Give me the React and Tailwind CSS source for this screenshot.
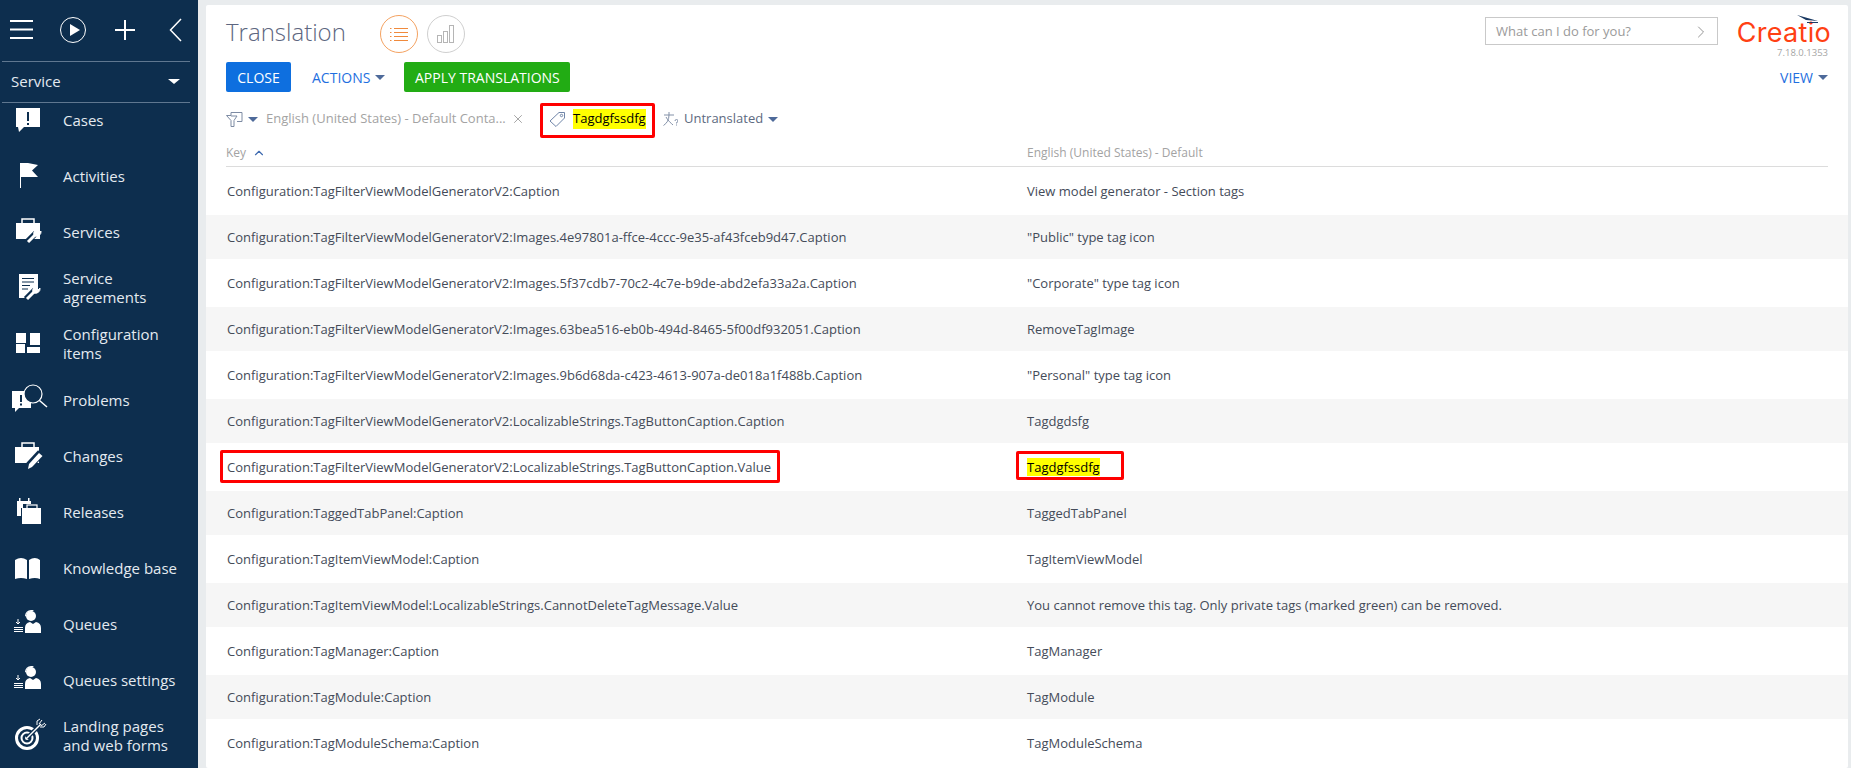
import { ChevronRight, ChevronUp, X } from 'lucide-react';

const NAV = [
  { label: ['Cases'], icon: 'cases' },
  { label: ['Activities'], icon: 'activities' },
  { label: ['Services'], icon: 'services' },
  { label: ['Service', 'agreements'], icon: 'agreements' },
  { label: ['Configuration', 'items'], icon: 'config' },
  { label: ['Problems'], icon: 'problems' },
  { label: ['Changes'], icon: 'changes' },
  { label: ['Releases'], icon: 'releases' },
  { label: ['Knowledge base'], icon: 'book' },
  { label: ['Queues'], icon: 'queues' },
  { label: ['Queues settings'], icon: 'queues' },
  { label: ['Landing pages', 'and web forms'], icon: 'target' },
];

const ROWS = [
  ['Configuration:TagFilterViewModelGeneratorV2:Caption', 'View model generator - Section tags'],
  ['Configuration:TagFilterViewModelGeneratorV2:Images.4e97801a-ffce-4ccc-9e35-af43fceb9d47.Caption', '"Public" type tag icon'],
  ['Configuration:TagFilterViewModelGeneratorV2:Images.5f37cdb7-70c2-4c7e-b9de-abd2efa33a2a.Caption', '"Corporate" type tag icon'],
  ['Configuration:TagFilterViewModelGeneratorV2:Images.63bea516-eb0b-494d-8465-5f00df932051.Caption', 'RemoveTagImage'],
  ['Configuration:TagFilterViewModelGeneratorV2:Images.9b6d68da-c423-4613-907a-de018a1f488b.Caption', '"Personal" type tag icon'],
  ['Configuration:TagFilterViewModelGeneratorV2:LocalizableStrings.TagButtonCaption.Caption', 'Tagdgdsfg'],
  ['Configuration:TagFilterViewModelGeneratorV2:LocalizableStrings.TagButtonCaption.Value', 'Tagdgfssdfg', true],
  ['Configuration:TaggedTabPanel:Caption', 'TaggedTabPanel'],
  ['Configuration:TagItemViewModel:Caption', 'TagItemViewModel'],
  ['Configuration:TagItemViewModel:LocalizableStrings.CannotDeleteTagMessage.Value', 'You cannot remove this tag. Only private tags (marked green) can be removed.'],
  ['Configuration:TagManager:Caption', 'TagManager'],
  ['Configuration:TagModule:Caption', 'TagModule'],
  ['Configuration:TagModuleSchema:Caption', 'TagModuleSchema'],
];

const NAVY = '#0d2e4e';

function Wrench({ x = 0, y = 0 }) {
  return (
    <g transform={`translate(${x} ${y})`}>
      <path d="M1 15 L10 6" stroke={NAVY} strokeWidth="6" fill="none" />
      <path d="M2 15 L10 7" stroke="white" strokeWidth="3" fill="none" />
      <path d="M8 8 a4.5 4.5 0 0 1 5-6 l-2.500 2.500 2 2 2.500-2.500 a4.500 4.500 0 0 1-6 5z" fill="white" stroke="white" strokeWidth="1" />
    </g>
  );
}

function Agent() {
  return (
    <>
      <circle cx="23" cy="12" r="5" fill="white" />
      <path d="M17 12 a6 6 0 0 1 6 -6 h3 l-2 1.500 a5 5 0 0 0 -6 5z" fill="white" />
      <path d="M17 29 v-5 q0 -5 5 -6 l3 2 l3 -2 q5 1 5 6 v5z" fill="white" />
      <path d="M10 15 v5 M8 18 l2 2 2-2" stroke="white" strokeWidth="1" fill="none" />
      <path d="M6 23.500 h9 M6 25.500 h9 M6 27.500 h9" stroke="white" strokeWidth="1" />
    </>
  );
}

function NavIcon({ name }) {
  return (
    <svg width="40" height="40" viewBox="0 0 40 40" className="shrink-0">
      {name === 'cases' && (
        <>
          <path d="M8 8 H32 V27 H16 L11 32 L10 27 H8 Z" fill="white" />
          <rect x="19" y="12" width="2" height="9" fill={NAVY} />
          <rect x="19" y="23" width="2" height="2" fill={NAVY} />
        </>
      )}
      {name === 'activities' && (
        <>
          <rect x="12" y="7" width="1" height="25" fill="white" />
          <path d="M13 7 H20 L30 9 L24 14.500 L30 21 H13 Z" fill="white" />
        </>
      )}
      {name === 'services' && (
        <>
          <rect x="14" y="7" width="12" height="5" fill="none" stroke="white" strokeWidth="1.500" />
          <rect x="8" y="11" width="24" height="16" fill="white" />
          <Wrench x={18} y={15} />
        </>
      )}
      {name === 'agreements' && (
        <>
          <path d="M11 6 H30 V22 L18 30 H11 Z" fill="white" />
          <path d="M14 10.500 H26 M14 14 H26 M14 17.500 H22 M14 21 H20" stroke={NAVY} strokeWidth="1.200" />
          <Wrench x={17} y={16} />
        </>
      )}
      {name === 'config' && (
        <>
          <rect x="8" y="9" width="10" height="10" fill="white" />
          <rect x="22" y="9" width="10" height="12" fill="white" />
          <rect x="8" y="20" width="9" height="9" fill="white" />
          <rect x="19" y="23" width="13" height="6" fill="white" />
        </>
      )}
      {name === 'problems' && (
        <>
          <path d="M4 11 H23 V28 H11 L7 32 V28 H4 Z" fill="white" />
          <rect x="12" y="15" width="2" height="7" fill={NAVY} />
          <rect x="12" y="23.500" width="2" height="2" fill={NAVY} />
          <circle cx="25" cy="14" r="9" fill={NAVY} stroke="white" strokeWidth="1.200" />
          <path d="M31.500 20.500 L39 27" stroke="white" strokeWidth="1.500" />
        </>
      )}
      {name === 'changes' && (
        <>
          <rect x="14" y="7" width="12" height="5" fill="none" stroke="white" strokeWidth="1.500" />
          <rect x="7" y="11" width="24" height="16" fill="white" />
          <path d="M20 31 L33 17" stroke={NAVY} strokeWidth="8" />
          <path d="M20 33 L21 28 L31 17 L34.500 20 L24 31 Z" fill="white" />
        </>
      )}
      {name === 'releases' && (
        <>
          <path d="M9 9 H23 V12 H15 V16 H13 V24 H9 Z" fill="white" />
          <rect x="11" y="6" width="1.500" height="3" fill="white" />
          <rect x="20" y="6" width="1.500" height="3" fill="white" />
          <rect x="19" y="13" width="10" height="4" fill="none" stroke="white" strokeWidth="1.200" />
          <rect x="14" y="16" width="19" height="16" fill="white" />
        </>
      )}
      {name === 'book' && (
        <path d="M7 12 Q13 8 19 12 V31 Q13 29 7 31 Z M21 12 Q27 8 32 12 V31 Q27 29 21 31 Z" fill="white" />
      )}
      {name === 'queues' && <Agent />}
      {name === 'target' && (
        <>
          <circle cx="19" cy="22" r="10.500" fill="none" stroke="white" strokeWidth="3" />
          <circle cx="19" cy="22" r="5.500" fill="none" stroke="white" strokeWidth="2" />
          <circle cx="19" cy="22" r="2" fill="white" />
          <path d="M19 22 L33 8" stroke={NAVY} strokeWidth="4" />
          <path d="M19 22 L33 8" stroke="white" strokeWidth="1.500" />
          <path d="M29 9 V5 L32 3 M32 11 H36 L38 8 M31 8 L34 4 M33 10 L37 7" stroke="white" strokeWidth="1" fill="none" />
        </>
      )}
    </svg>
  );
}

function Sidebar() {
  return (
    <aside className="w-[198px] shrink-0 h-full bg-[#0d2e4e] text-[#e4eaf0] overflow-hidden">
      <div className="h-[61px] flex items-center relative">
        <svg width="198" height="61" viewBox="0 0 198 61">
          <path d="M10 21 H33 M10 29.500 H33 M10 38 H33" stroke="white" strokeWidth="2" />
          <circle cx="73" cy="30" r="12.500" fill="none" stroke="white" strokeWidth="1" />
          <path d="M70 24 L80 30 L70 36 Z" fill="white" />
          <path d="M115 30 H135 M125 20 V40" stroke="white" strokeWidth="2" />
          <path d="M181 19 L170.500 30 L181 41" stroke="white" strokeWidth="1.500" fill="none" />
        </svg>
      </div>
      <div className="mx-[2px] w-[188px] h-[42px] pb-[2px] border-y border-[#5f7790] flex items-center justify-between pl-[9px] pr-[10px] text-[15px]">
        <span>Service</span>
        <span className="w-0 h-0 border-x-[6px] border-x-transparent border-t-[5px] border-t-white" />
      </div>
      <nav className="-mt-[11px] text-[15px] leading-[19px]">
        {NAV.map((item, i) => (
          <div key={i} className="h-[56px] flex items-center pl-2">
            <NavIcon name={item.icon} />
            <div className="ml-[15px]">
              {item.label.map((line) => (
                <div key={line}>{line}</div>
              ))}
            </div>
          </div>
        ))}
      </nav>
    </aside>
  );
}

function Caret({ className = 'border-t-[#4e6a9a]' }) {
  return <span className={`inline-block w-0 h-0 border-x-[5px] border-x-transparent border-t-[5px] ${className}`} />;
}

function Header() {
  return (
    <div className="pl-5 pr-[20px]">
      <div className="h-[57px] flex items-start">
        <h1 className="mt-[8px] text-[24px] leading-[38px] font-light text-[#5d6680]">Translation</h1>
        <div className="mt-[10px] ml-[34px] w-[38px] h-[38px] rounded-full border border-[#f4a261] flex items-center justify-center">
          <svg width="18" height="14" viewBox="0 0 18 14" stroke="#f08a3c" strokeWidth="1">
            <path d="M0 1.500 H1.500 M4 1.500 H18 M0 5.500 H1.500 M4 5.500 H18 M0 9.500 H1.500 M4 9.500 H18 M0 13.500 H1.500 M4 13.500 H18" />
          </svg>
        </div>
        <div className="mt-[10px] ml-[9px] w-[38px] h-[38px] rounded-full border border-[#cfcfcf] flex items-center justify-center">
          <svg width="18" height="18" viewBox="0 0 18 18" fill="none" stroke="#b5b5b5" strokeWidth="1">
            <rect x="0.500" y="10.500" width="4" height="7" />
            <rect x="6.500" y="6.500" width="4" height="11" />
            <rect x="12.500" y="0.500" width="4" height="17" />
          </svg>
        </div>
        <div className="ml-auto mt-[12px] w-[233px] h-[28px] pt-px border border-[#c9c9c9] flex items-center justify-between pl-[10px] pr-[6px] text-[13px] text-[#9a9a9a]">
          <span>What can I do for you?</span>
          <ChevronRight size={20} strokeWidth={1} className="text-[#808080]" />
        </div>
        <div className="ml-[17px] -mr-[3px] w-[96px] flex flex-col items-end relative">
          <span className="mt-[11px] font-['Inter',sans-serif] font-normal text-[27px] leading-[33px] tracking-[0.3px] text-[#ff4013]">Creatio</span>
          <svg width="22" height="11" viewBox="0 0 22 11" className="absolute right-[12px] top-[10px]">
            <path d="M0 0 L21 6 L9 5 Z M10 7 H21 V8 L10 8 Z" fill="#1b3a63" />
          </svg>
          <span className="-mt-[3px] pr-[3px] text-[9.500px] leading-[13px] text-[#a5a5a5]">7.18.0.1353</span>
        </div>
      </div>
      <div className="h-[30px] flex items-center text-[14px]">
        <button className="w-[65px] h-[30px] rounded-[2px] bg-[#0e6fdf] text-white">CLOSE</button>
        <span className="ml-[21px] text-[#1f6fe0]">ACTIONS</span>
        <Caret className="ml-[5px] border-t-[#4e6a9a]" />
        <button className="ml-[19px] w-[166px] h-[30px] rounded-[2px] bg-[#22ac14] text-white">APPLY TRANSLATIONS</button>
        <span className="ml-auto text-[#1f6fe0]">VIEW</span>
        <Caret className="ml-[5px] border-t-[#4e6a9a]" />
      </div>
      <div className="mt-[11px] h-[35px] pb-[3px] flex items-center text-[13px]">
        <svg width="17" height="16" viewBox="0 0 17 16" fill="none" stroke="#7d8ba3" strokeWidth="1">
          <path d="M0.500 4.500 H5 V1.500 H16 V10.500 H11 M0.500 4.500 L5 9.500 V15.500 H8 V9.500 L11 5 H5" />
        </svg>
        <Caret className="ml-[5px] border-t-[#4e6a9a]" />
        <span className="ml-[8px] w-[240px] whitespace-nowrap text-[#a3a3a3]">English (United States) - Default Conta...</span>
        <X size={14} strokeWidth={1} className="ml-[5px] text-[#666666]" />
        <div className="ml-[15px] w-[115px] h-[35px] -mb-[3px] border-[3px] border-[#ff0000] rounded-[2px] flex items-center pl-[6px] pb-[3px] shrink-0">
          <svg width="17" height="16" viewBox="0 0 17 16" fill="none" stroke="#6f85a8" strokeWidth="1">
            <path d="M1 10 L10 1.500 H15.500 V7 L7 15.500 Z" />
            <circle cx="12.500" cy="4.500" r="1.200" />
          </svg>
          <span className="ml-[7px] bg-[#ffff00] text-black">Tagdgfssdfg</span>
        </div>
        <svg width="15" height="14" viewBox="0 0 15 14" fill="none" stroke="#8391a8" strokeWidth="1" className="ml-[8px]">
          <path d="M1 3 H11 M6 0 V3 C6 8 4 11 0.500 13.500 M3 5 C5 9 8 11 10 13" />
          <path d="M12 9 a1.500 1.500 0 1 1 1.500 1.500 V11.500 M13.500 12.500 V13.500" />
        </svg>
        <span className="ml-[6px] text-[#5d6a80]">Untranslated</span>
        <Caret className="ml-[5px] border-t-[#4e6a9a]" />
      </div>
      <div className="mt-[7px] h-[22px] border-b border-[#dcdcdc] grid grid-cols-[801px_1fr] text-[12px] text-[#a3a3a3] leading-[16px]">
        <div className="flex items-start gap-[6px]">
          Key
          <ChevronUp size={14} strokeWidth={2} className="mt-[1px] text-[#3f6bb0]" />
        </div>
        <div>English (United States) - Default</div>
      </div>
    </div>
  );
}

function Row({ row, index }) {
  const [key, value, marked] = row;
  const gray = index % 2 === 1;
  return (
    <div className="h-[46px] py-px">
      <div className={`h-[44px] pt-[2px] grid grid-cols-[800px_1fr] items-center pl-[21px] text-[13px] text-[#444b59] ${gray ? 'bg-[#f6f6f6]' : 'bg-white'}`}>
        <div className="relative whitespace-nowrap">
          {key}
          {marked && <span className="absolute -left-[7px] -top-[8px] w-[560px] h-[33px] border-[3px] border-[#ff0000] rounded-[2px]" />}
        </div>
        <div className="relative whitespace-nowrap">
          {marked ? (
            <>
              <span className="bg-[#ffff00] text-black">{value}</span>
              <span className="absolute -left-[11px] -top-[7px] w-[108px] h-[29px] border-[3px] border-[#ff0000] rounded-[2px]" />
            </>
          ) : (
            value
          )}
        </div>
      </div>
    </div>
  );
}

export default function App() {
  return (
    <div className="w-[1851px] h-[768px] overflow-hidden flex bg-[#e9ecee] font-['Open_Sans',sans-serif]">
      <Sidebar />
      <main className="ml-[8px] mr-[3px] mt-[5px] flex-1 bg-white rounded-[2px] overflow-hidden">
        <Header />
        <div className="mt-px">
          {ROWS.map((row, i) => (
            <Row key={i} row={row} index={i} />
          ))}
        </div>
      </main>
    </div>
  );
}
